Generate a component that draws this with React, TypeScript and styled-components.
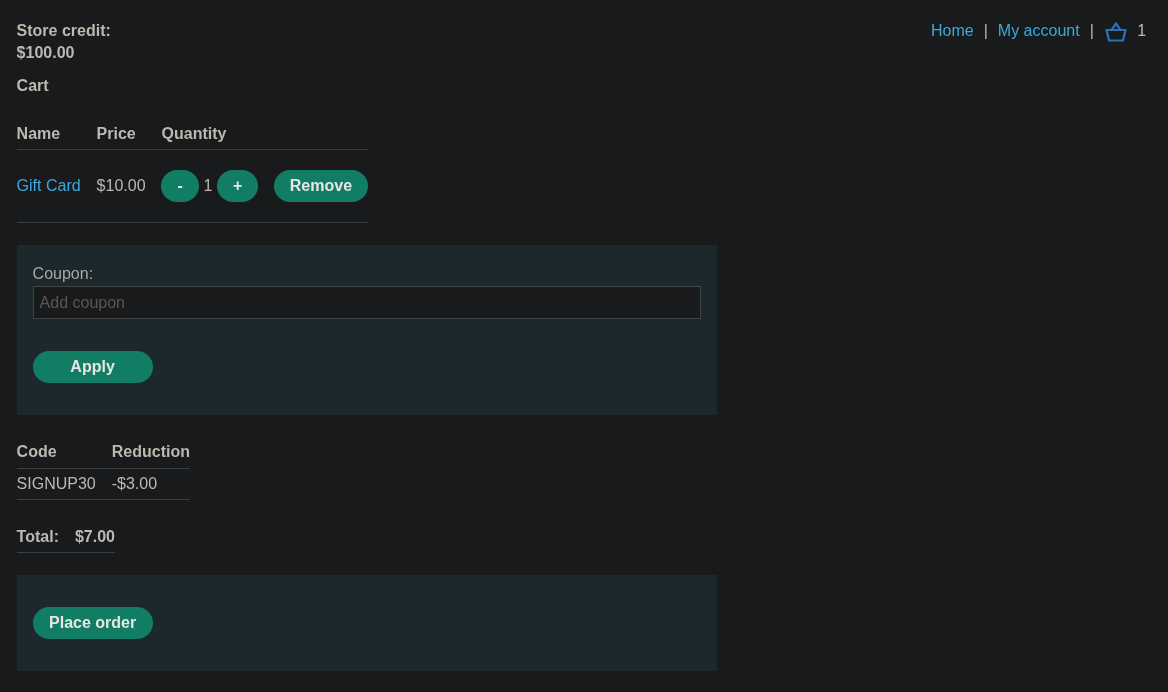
import React from "react";
import styled, { createGlobalStyle } from "styled-components";

const App = () => {
  return (
    <>
      <GlobalStyle />
      <Page>
        <Header>
          <Credit>
            Store credit:
            <br />
            $100.00
          </Credit>
          <Nav>
            <NavLink href="#">Home</NavLink>
            <Sep>|</Sep>
            <NavLink href="#">My account</NavLink>
            <Sep>|</Sep>
            <Basket viewBox="0 0 22 20" aria-hidden="true">
              <path d="M0.5 8h21M1.5 8l2.5 10.5h14l2.5-10.5M6.5 8l4.5-6.5 4.5 6.5" />
            </Basket>
            <Count>1</Count>
          </Nav>
        </Header>
        <CartTitle>Cart</CartTitle>
        <CartTable>
          <thead>
            <tr>
              <th>Name</th>
              <th>Price</th>
              <th colSpan={2}>Quantity</th>
            </tr>
          </thead>
          <tbody>
            <tr>
              <td>
                <ItemLink href="#">Gift Card</ItemLink>
              </td>
              <td>$10.00</td>
              <td>
                <Quantity>
                  <Button>-</Button>
                  <span>1</span>
                  <Button>+</Button>
                  <Button>Remove</Button>
                </Quantity>
              </td>
            </tr>
          </tbody>
        </CartTable>
        <CouponPanel>
          <CouponLabel htmlFor="coupon">Coupon:</CouponLabel>
          <CouponInput id="coupon" placeholder="Add coupon" />
          <WideButton>Apply</WideButton>
        </CouponPanel>
        <ReductionTable>
          <thead>
            <tr>
              <th>Code</th>
              <th>Reduction</th>
            </tr>
          </thead>
          <tbody>
            <tr>
              <td>SIGNUP30</td>
              <td>-$3.00</td>
            </tr>
          </tbody>
        </ReductionTable>
        <TotalTable>
          <tbody>
            <tr>
              <th>Total:</th>
              <th>$7.00</th>
            </tr>
          </tbody>
        </TotalTable>
        <OrderPanel>
          <WideButton>Place order</WideButton>
        </OrderPanel>
      </Page>
    </>
  );
};

export default App;

const GlobalStyle = createGlobalStyle`
  * {
    box-sizing: border-box;
  }
  html, body {
    margin: 0;
    background-color: #181a1b;
  }
  body {
    color: #bdb8b0;
    font-family: "Liberation Sans", Arial, sans-serif;
    font-size: 16px;
  }
`;
const Page = styled.div`
  width: 100%;
  min-height: 692px;
  padding: 20px 21.8px 21px 16.6px;
  display: flex;
  flex-direction: column;
  align-items: flex-start;
  will-change: transform;
`;
const Header = styled.div`
  width: 100%;
  display: flex;
  justify-content: space-between;
  align-items: flex-start;
`;
const Credit = styled.div`
  font-weight: bold;
  line-height: 22px;
`;
const Nav = styled.div`
  display: flex;
  align-items: center;
  height: 22px;
`;
const NavLink = styled.a`
  color: #3ca9de;
  text-decoration: none;
`;
const Sep = styled.span`
  margin: 0 10px;
`;
const Basket = styled.svg`
  width: 22px;
  height: 20px;
  margin: 1px 10px 0 1.5px;
  fill: none;
  stroke: #2d72b8;
  stroke-width: 2.2;
`;
const Count = styled.span`
  display: block;
`;
const CartTitle = styled.div`
  margin-top: 13px;
  font-weight: bold;
  line-height: 18px;
`;
const CartTable = styled.table`
  margin-top: 30px;
  border-collapse: collapse;
  th {
    padding: 0 16px 6px 0;
    border-bottom: 1px solid #3a3e41;
    text-align: left;
    line-height: 18px;
  }
  th:last-child,
  td:last-child {
    padding-right: 0;
  }
  td {
    padding: 20px 16px 20px 0;
    border-bottom: 1px solid #3a3e41;
  }
`;
const ItemLink = styled.a`
  color: #3ca9de;
  text-decoration: none;
`;
const Quantity = styled.div`
  display: flex;
  align-items: center;
  gap: 4.5px;
  margin-left: -0.5px;
  button:last-child {
    margin-left: 11px;
  }
`;
const Button = styled.button`
  min-width: 38px;
  height: 32px;
  padding: 0 16px;
  border: 0;
  border-radius: 20px;
  background-color: #117d65;
  color: #e8e6e3;
  font-family: inherit;
  font-size: 16px;
  font-weight: bold;
`;
const WideButton = styled(Button)`
  width: 120px;
  padding: 0;
`;
const CouponPanel = styled.div`
  width: 700px;
  margin-top: 22px;
  padding: 20px 16px 32px;
  display: flex;
  flex-direction: column;
  align-items: flex-start;
  background-color: #1c282c;
`;
const CouponLabel = styled.label`
  line-height: 18px;
  color: #ada8a1;
`;
const CouponInput = styled.input`
  width: 100%;
  height: 33px;
  margin: 3px 0 32px;
  padding: 0 6px;
  border: 1px solid #3e4346;
  border-radius: 0;
  outline: 0;
  background-color: #181a1b;
  color: #c8c3bc;
  font-family: inherit;
  font-size: 16px;
  &::placeholder {
    color: #5c5850;
    opacity: 1;
  }
`;
const ReductionTable = styled.table`
  margin-top: 28px;
  border-collapse: collapse;
  th {
    padding: 0 16px 7px 0;
    border-bottom: 1px solid #3a3e41;
    text-align: left;
    line-height: 18px;
  }
  td {
    padding: 6px 16px 6px 0;
    border-bottom: 1px solid #3a3e41;
    line-height: 18px;
  }
  th:last-child,
  td:last-child {
    padding-right: 0;
  }
`;
const TotalTable = styled.table`
  margin-top: 28px;
  border-collapse: collapse;
  th {
    padding: 0 16px 6px 0;
    border-bottom: 1px solid #3a3e41;
    text-align: left;
    line-height: 18px;
  }
  th:last-child {
    padding-right: 0;
  }
`;
const OrderPanel = styled.div`
  width: 700px;
  margin-top: 22px;
  padding: 32px 16px;
  background-color: #1c282c;
`;
